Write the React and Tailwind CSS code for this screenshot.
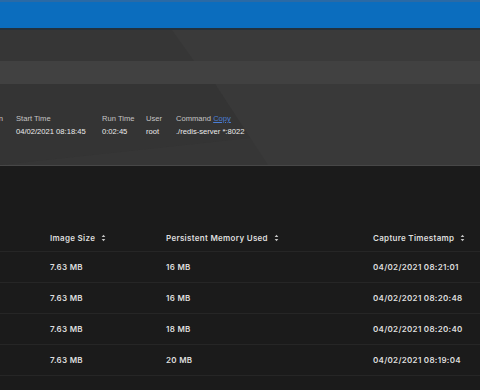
import React from 'react';

const info = [
  { label: 'Start Time', value: '04/02/2021 08:18:45', w: 'w-[86px]' },
  { label: 'Run Time', value: '0:02:45', w: 'w-[44px]' },
  { label: 'User', value: 'root', w: 'w-[30px]' },
];

const rows = [
  { size: '7.63 MB', mem: '16 MB', ts: '04/02/2021 08:21:01' },
  { size: '7.63 MB', mem: '16 MB', ts: '04/02/2021 08:20:48' },
  { size: '7.63 MB', mem: '18 MB', ts: '04/02/2021 08:20:40' },
  { size: '7.63 MB', mem: '20 MB', ts: '04/02/2021 08:19:04' },
];

const SortIcon = () => (
  <svg width="5" height="8" viewBox="0 0 5 8" className="ml-[6px] inline-block">
    <path d="M2.5 0.8 L4.3 3 L0.7 3 Z" fill="#c8c8c8" />
    <path d="M2.5 7.2 L4.3 5 L0.7 5 Z" fill="#c8c8c8" />
  </svg>
);

const HeaderCell = ({ children }) => (
  <div className="flex items-center">
    <span>{children}</span>
    <SortIcon />
  </div>
);

export default function App() {
  return (
    <div className="w-[480px] h-[390px] overflow-hidden bg-[#1b1b1b] font-['Liberation_Sans',Arial,sans-serif]">
      {/* top bar */}
      <div className="h-[30px] bg-[#0b6dbe] border-t-2 border-[#2a6aa6] border-b-2 border-b-[#23313d]" />

      {/* hero panel */}
      <div className="relative bg-[#363636]">
        <svg className="absolute inset-0" width="480" height="135" viewBox="0 0 480 135">
          <polygon points="172,0 480,0 480,31 194,31" fill="#3a3a3a" />
          <polygon points="215,54 480,54 480,135 268,135" fill="#393939" />
          <polygon points="0,54 215,54 250,108 0,135" fill="#343434" />
        </svg>
        <div className="relative h-[31px]" />
        <div className="relative h-[23px] bg-[#414141]" />
        <div className="relative h-[81px] flex items-start pt-[28px] pl-[16px] text-[7.6px] leading-[13px]">
          <div className="absolute left-[-40px] top-[28px] w-[43px] text-[#c9c9c9] text-right">Version</div>
          {info.map((i) => (
            <div key={i.label} className={`${i.w} shrink-0`}>
              <div className="text-[#c4c4c4]">{i.label}</div>
              <div className="text-[#ececec]">{i.value}</div>
            </div>
          ))}
          <div>
            <div className="text-[#c4c4c4]">
              Command <span className="text-[#4a7ed6] underline">Copy</span>
            </div>
            <div className="text-[#ececec]">./redis-server *:8022</div>
          </div>
        </div>
      </div>
      <div className="h-px bg-[#474747]" />

      {/* table */}
      <div className="pt-[59px] text-[8px] font-semibold tracking-[0.3px] text-[#dedede] font-['Inter',sans-serif]">
        <div className="grid grid-cols-[116px_207px_1fr] pl-[50px] h-[27px] items-center border-b border-[#262626]">
          <HeaderCell>Image Size</HeaderCell>
          <HeaderCell>Persistent Memory Used</HeaderCell>
          <HeaderCell>Capture Timestamp</HeaderCell>
        </div>
        {rows.map((r, idx) => (
          <div
            key={idx}
            className="grid grid-cols-[116px_207px_1fr] pl-[50px] h-[31px] items-center border-b border-[#262626]"
          >
            <div>{r.size}</div>
            <div>{r.mem}</div>
            <div>{r.ts}</div>
          </div>
        ))}
      </div>
    </div>
  );
}
